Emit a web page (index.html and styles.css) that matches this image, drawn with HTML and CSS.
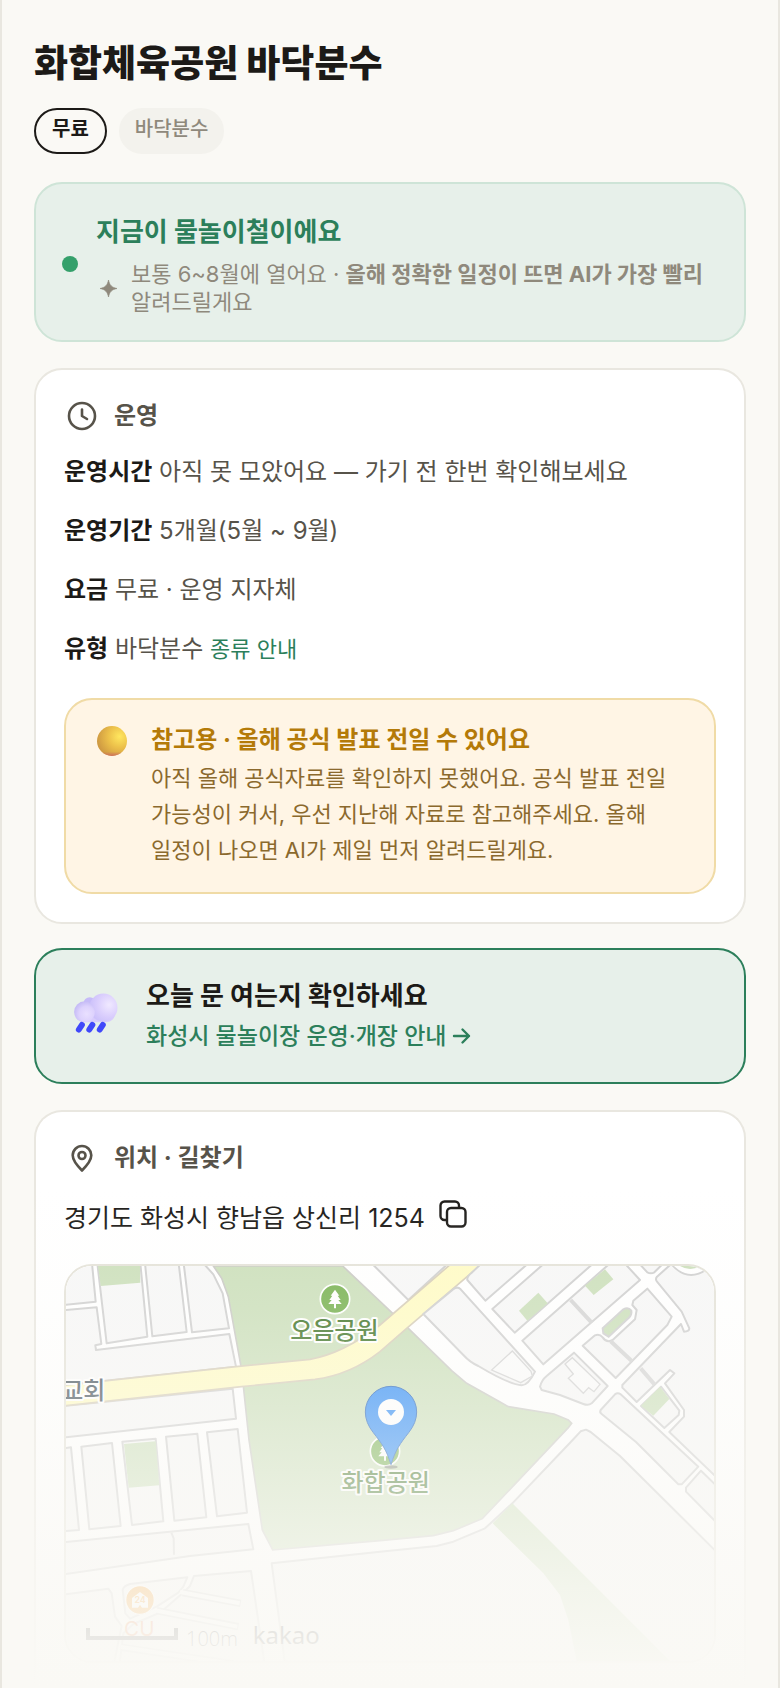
FILE: index.html
```html
<!DOCTYPE html>
<html lang="ko">
<head>
<meta charset="utf-8">
<meta name="viewport" content="width=device-width, initial-scale=1">
<title>화합체육공원 바닥분수</title>
<link rel="stylesheet" href="styles.css">
</head>
<body>
<main class="page">
  <header class="header">
    <h1 class="title">화합체육공원 바닥분수</h1>
    <div class="tags">
      <span class="tag tag-free">무료</span>
      <span class="tag">바닥분수</span>
    </div>
  </header>

  <section class="card status">
    <span class="status-dot"></span>
    <div class="status-body">
      <h2 class="status-title">지금이 물놀이철이에요</h2>
      <div class="status-note">
        <svg class="spark" viewBox="0 0 16 16" aria-hidden="true"><path d="M8 0C9 4.800 11 7 16 8C11 9 9 11.200 8 16C7 11.200 5 9 0 8C5 7 7 4.800 8 0Z" fill="currentColor" stroke="currentColor" stroke-width=".6"/></svg>
        <p>보통 6~8월에 열어요 · <strong>올해 정확한 일정이 뜨면 AI가 가장 빨리</strong> 알려드릴게요</p>
      </div>
    </div>
  </section>

  <section class="card info">
    <h2 class="card-head">
      <svg class="head-icon" viewBox="0 0 36 36" fill="none" stroke="currentColor" stroke-width="2.600" stroke-linecap="round" stroke-linejoin="round" aria-hidden="true"><circle cx="18" cy="18" r="13"/><path d="M18 11.500V18L23 21"/></svg>
      운영
    </h2>
    <div class="rows">
      <p><strong>운영시간</strong> 아직 못 모았어요 — 가기 전 한번 확인해보세요</p>
      <p><strong>운영기간</strong> 5개월(5월 ~ 9월)</p>
      <p><strong>요금</strong> 무료 · 운영 지자체</p>
      <p><strong>유형</strong> 바닥분수 <a class="kind-link" href="#kinds">종류 안내</a></p>
    </div>
    <aside class="notice">
      <svg class="orb" viewBox="0 0 30 30" aria-hidden="true">
        <defs>
          <radialGradient id="orb" cx=".75" cy=".35" r=".75"><stop offset="0" stop-color="#ffe75f"/><stop offset=".5" stop-color="#ecc04a"/><stop offset="1" stop-color="#cf9a42"/></radialGradient>
          <linearGradient id="orbBase" x1="0" y1="0" x2="0" y2="1"><stop offset=".86" stop-color="#d0705e" stop-opacity="0"/><stop offset="1" stop-color="#d0705e"/></linearGradient>
        </defs>
        <circle cx="15" cy="15" r="15" fill="url(#orb)"/><circle cx="15" cy="15" r="15" fill="url(#orbBase)"/>
      </svg>
      <div class="notice-body">
        <h3 class="notice-title">참고용 · 올해 공식 발표 전일 수 있어요</h3>
        <p class="notice-text">아직 올해 공식자료를 확인하지 못했어요. 공식 발표 전일 가능성이 커서, 우선 지난해 자료로 참고해주세요. 올해 일정이 나오면 AI가 제일 먼저 알려드릴게요.</p>
      </div>
    </aside>
  </section>

  <a class="card check" href="#notice">
    <svg class="cloud" viewBox="0 3 44 44" aria-hidden="true">
      <defs>
        <radialGradient id="puffL" cx=".6" cy=".6" r=".6"><stop offset="0" stop-color="#e9e0ff"/><stop offset=".6" stop-color="#ddd2fd"/><stop offset="1" stop-color="#c6bcf6"/></radialGradient>
        <radialGradient id="puffR" cx=".7" cy=".4" r=".7"><stop offset="0" stop-color="#f0e9ff"/><stop offset=".6" stop-color="#dacefd"/><stop offset="1" stop-color="#cbc0fa"/></radialGradient>
      </defs>
      <circle cx="17" cy="13" r="6" fill="#c6bbf8"/>
      <rect x="3" y="14" width="38" height="17" rx="8" fill="#d8ccfc"/>
      <circle cx="30" cy="17" r="13.500" fill="url(#puffR)"/>
      <circle cx="12" cy="21" r="10" fill="url(#puffL)"/>
      <path d="M9.500 33.500L6.500 38M19.500 33.500L16.500 38M29.500 33.500L26.500 38" stroke="#4048fa" stroke-width="5.600" stroke-linecap="round"/>
    </svg>
    <span class="check-body">
      <strong class="check-title">오늘 문 여는지 확인하세요</strong>
      <span class="check-link">화성시 물놀이장 운영·개장 안내
        <svg class="arrow" viewBox="0 0 20 20" fill="none" stroke="currentColor" stroke-width="2.400" stroke-linecap="round" stroke-linejoin="round" aria-hidden="true"><path d="M2 10H17M10.500 3.500L17 10L10.500 16.500"/></svg>
      </span>
    </span>
  </a>

  <section class="card place">
    <h2 class="card-head">
      <svg class="head-icon" viewBox="0 0 36 36" fill="none" stroke="currentColor" stroke-width="2.600" stroke-linejoin="round" aria-hidden="true"><path d="M18 30.500C12 24.500 8.700 20 8.700 15.300A9.300 9.300 0 0 1 27.300 15.300C27.300 20 24 24.500 18 30.500Z"/><circle cx="18" cy="15.500" r="3.500"/></svg>
      위치 · 길찾기
    </h2>
    <div class="address">
      <span>경기도 화성시 향남읍 상신리 1254</span>
      <button class="copy" type="button" aria-label="주소 복사">
        <svg viewBox="0 0 28 28" fill="none" stroke="currentColor" stroke-width="2.400" stroke-linejoin="round" aria-hidden="true"><rect x="8" y="8" width="18.500" height="18.500" rx="4"/><path d="M8 20H5.500A4 4 0 0 1 1.500 16V5.500A4 4 0 0 1 5.500 1.500H16A4 4 0 0 1 20 5.500V8"/></svg>
      </button>
    </div>
    <div class="map">
      <svg class="map-art" viewBox="198 78 1944 1184" preserveAspectRatio="xMidYMid slice" role="img" aria-label="화합공원 지도">
        <rect x="198" y="78" width="1944" height="1184" fill="#fff"/>
        <g class="park">
          <path d="M640 78H1028L1178 220L1225 265L1355 392L1400 430L1495 483L1525 500L1662 522L1705 540L1715 550L1705 563L1447 836L1360 872L1300 887L1140 902L818 930L787 870L747 600L725 390L685 170L665 115Z"/>
        </g>
        <g class="block">
          <path d="M190 70H276L287 185L190 195Z"/>
          <path d="M292 70H421L442 290L320 310Z"/>
          <path d="M435 70H536L560 276L457 289Z"/>
          <path d="M551 70H610L640 103L668 160L687 265L576 277Z"/>
          <path d="M190 211L290 202L304 312L286 316L288 330L688 282L708 380L190 436Z"/>
          <path d="M190 498L698 446L708 536L190 593Z"/>
          <path d="M190 625L213 622L237 870L190 874Z"/>
          <path d="M244 620L336 609L362 858L268 868Z"/>
          <path d="M367 605L467 596L490 844L396 855Z"/>
          <path d="M498 590L592 581L619 832L523 842Z"/>
          <path d="M621 577L713 567L741 818L651 829Z"/>
          <path d="M190 907L745 852L760 928L570 948L190 1003Z"/>
          <path d="M514 878L521 895L522 944"/>
          <path d="M190 1064L325 1046L335 1060L345 1130L365 1158L340 1280H190Z"/>
          <path d="M368 1050Q370 1038 390 1032L562 1012L550 1040L535 1058L470 1100L390 1136L376 1120Z"/>
          <path d="M582 1008L753 993L795 1280H358L370 1180L400 1152L480 1118L552 1056L570 1038Z"/>
          <path d="M815 970L1140 935L1310 918L1360 905L1455 865L1537 790L1718 600L1742 574L1758 569L1772 576L1860 648L2150 936V1280H856Z"/>
          <path d="M1115 70H1345L1225 180Z"/>
        </g>
        <g class="lane">
          <path d="M548 1058L722 1090M470 1112L715 1160M365 1222L700 1272"/>
        </g>
        <g class="lane-fill">
          <path d="M540 1056L719 1090M464 1111L712 1160M362 1221L700 1272"/>
        </g>
        <g class="green">
          <path d="M294 78H420L421 128L302 138Z"/>
          <path d="M372 612L467 604L478 736L386 743Z"/>
          <path d="M1478 850L1537 790L2010 1263H1730L1705 1140L1680 1065L1630 1000Z"/>
        </g>
        <path class="avenue" d="M190 436L708 380L930 358Q1030 340 1140 255L1355 70H1448L1220 265L1140 335Q1050 405 945 418L725 440L190 498Z"/>
        <g transform="translate(1140 0)">
          <g class="block">
            <path d="M130 222L220 148Q232 138 242 148L465 395Q445 436 425 436Q385 432 295 378Q270 367 250 345Z"/>
            <path d="M262 120Q260 110 275 98L305 70H445L316 182Z"/>
            <path d="M337 207L493 70H640L404 278Z"/>
            <path d="M427 302L690 70H734L780 120L490 373Z"/>
            <path d="M777 70L802 97Q813 103 823 97L850 70Z"/>
            <path d="M608 317L645 286Q658 280 668 292Q680 310 698 300L765 238L770 210L757 195L760 182L802 146L875 230L862 255L707 414Z"/>
            <path d="M876 70L831 110Q825 118 831 125L905 215L928 265Q928 275 912 275L903 252L727 435V443L770 486L870 390L883 400L855 430L912 510V530L868 576L1010 712V70Z"/>
            <path d="M783 498L843 440L898 512L896 525L853 564Z"/>
            <path d="M480 440Q485 420 500 408L582 338L683 438L635 490Q625 498 610 492L540 465L485 450Z"/>
            <path d="M662 510L705 463Q713 456 722 463L955 680L905 733H895L768 606L665 522Q658 517 662 510Z"/>
            <path d="M963 692L1010 738V848L918 755V743Z"/>
          </g>
          <g class="green">
            <path d="M417 212L475 158L503 190L442 242Z"/>
            <path d="M615 137L675 88L700 118L641 165Z"/>
            <path d="M783 497L840 440L868 477L820 527Z"/>
          </g>
          <path class="plot" d="M668 265L730 208Q745 200 754 212Q756 222 748 232L686 290L670 280Z"/>
          <path class="bend" d="M880 70Q925 120 978 82"/>
          <path class="bend-fill" d="M880 66Q925 116 978 78"/>
          <path class="green" d="M900 78H962Q930 96 900 78Z"/>
          <path class="alley" d="M572 180L635 248M692 304L756 364M782 385L824 434"/>
          <path class="building" d="M397 333L335 390L422 428L457 408L453 394Z"/>
          <path class="building" d="M555 372L577 353L660 433L642 455L626 443L610 460L565 415L580 402Z"/>
        </g>
        <g transform="translate(1005 177)">
          <circle class="tree-bg" r="44"/>
          <path fill="#fff" d="M0 -28L13 -10H8L17 3H10L20 15H3V28H-3V15H-20L-10 3H-17L-8 -10H-13Z"/>
        </g>
        <g transform="translate(1155 634)">
          <circle class="tree-bg" r="44"/>
          <path fill="#fff" d="M0 -28L13 -10H8L17 3H10L20 15H3V28H-3V15H-20L-10 3H-17L-8 -10H-13Z"/>
        </g>
        <ellipse cx="1173" cy="681" rx="20" ry="5" fill="#555" opacity=".6"/>
        <path d="M1173 674C1160 630 1145 610 1120 578Q1096 548 1096 516A77 77 0 0 1 1250 516Q1250 548 1226 578C1201 610 1186 630 1173 674Z" fill="#2f8cf6" stroke="#2464bc" stroke-width="3"/>
        <circle cx="1173" cy="516" r="39" fill="#fff"/>
        <path d="M1158 510H1188L1173 528Z" fill="#2f8cf6"/>
        <g class="map-label">
          <text x="1003" y="296" text-anchor="middle">오음공원</text>
          <text x="1157" y="754" text-anchor="middle">화합공원</text>
          <text class="label-church" x="316" y="478" text-anchor="end">교회</text>
        </g>
        <circle cx="420" cy="1080" r="43" fill="#f58a00" stroke="#fff" stroke-width="4"/>
        <path d="M396 1103V1074L420 1056L444 1074V1103H426L420 1094L414 1103Z" fill="#fff"/>
        <text class="label-hours" x="420" y="1090" text-anchor="middle">24</text>
        <text class="label-store" x="418" y="1188" text-anchor="middle">CU</text>
        <path d="M264 1164V1194H528V1164" fill="none" stroke="#111" stroke-width="12"/>
        <text class="label-scale" x="558" y="1217">100m</text>
        <text class="label-brand" x="758" y="1211">kakao</text>
      </svg>
    </div>
  </section>
  <div class="fade"></div>
</main>
</body>
</html>
```
FILE: styles.css
```css
* { box-sizing: border-box; }

body {
  margin: 0;
  background: #faf9f5;
  color: #1c1a17;
  font-family: Inter, "Noto Sans CJK KR", sans-serif;
  font-size: 24px;
  line-height: 36px;
  word-break: keep-all;
}

h1, h2, h3, p { margin: 0; }
a { color: inherit; text-decoration: none; }

.page {
  position: relative;
  display: flex;
  flex-direction: column;
  gap: 26px;
  min-height: 100vh;
  padding: 36px 32px 0;
  border: solid #e9e7e0;
  border-width: 0 2px;
  overflow: hidden;
}

.header { padding-bottom: 2px; }
.title { font-size: 37px; line-height: 56px; font-weight: 800; }
.tags { display: flex; gap: 12px; margin-top: 16px; }
.tag {
  padding: 5px 14px 9px;
  border: 2px solid #f3f2ed;
  border-radius: 23px;
  background: #f3f2ed;
  color: #8f897c;
  font-size: 20px;
  line-height: 28px;
  font-weight: 500;
}
.tag-free { padding-inline: 16px; border-color: #1c1a17; background: #faf9f5; color: #1c1a17; font-weight: 700; }

.card {
  padding: 28px;
  border: 2px solid #e9e7e0;
  border-radius: 28px;
  background: #fff;
}

.status {
  display: flex;
  align-items: center;
  gap: 18px;
  padding: 28px 26px 24px;
  border-color: #cee4d7;
  background: #e7f0ea;
}
.status-dot { flex: none; width: 16px; height: 16px; border-radius: 50%; background: #35a06b; }
.status-title { color: #2c7f5b; font-size: 26px; line-height: 40px; font-weight: 700; }
.status-note {
  display: flex;
  align-items: center;
  gap: 14px;
  padding: 8px 0 0 4px;
  color: #8f897c;
  font-size: 22px;
  line-height: 28px;
}
.spark { flex: none; width: 17px; height: 17px; }

.card-head {
  display: flex;
  align-items: center;
  gap: 14px;
  color: #57534a;
  font-size: 24px;
  line-height: 36px;
  font-weight: 700;
}
.head-icon { flex: none; width: 36px; height: 36px; }

.rows { display: flex; flex-direction: column; gap: 23px; margin-top: 20px; color: #57534a; }
.rows strong { color: #1c1a17; }
.kind-link { color: #2c7f5b; font-size: 22px; }

.notice {
  display: flex;
  gap: 24px;
  margin-top: 31px;
  padding: 22px 30px 24px 31px;
  border: 2px solid #f0dba6;
  border-radius: 28px;
  background: #fff5e5;
}
.orb { flex: none; width: 30px; height: 30px; margin-top: 4px; }
.notice-title { color: #b47a08; font-size: 24px; line-height: 36px; font-weight: 700; }
.notice-text { margin-top: 2px; color: #8b692d; font-size: 22px; line-height: 36px; }

.check {
  display: flex;
  align-items: center;
  gap: 28px;
  margin-top: -2px;
  padding: 26px 36px;
  border-color: #2c7f5b;
  background: #e7f0ea;
}
.cloud { flex: none; width: 46px; height: 46px; }
.check-body { display: flex; flex-direction: column; }
.check-title { font-size: 26px; line-height: 40px; }
.check-link { display: flex; align-items: center; gap: 6px; color: #2c7f5b; font-size: 23px; line-height: 40px; font-weight: 500; }
.arrow { width: 20px; height: 20px; }

.place { flex: 1; padding-bottom: 24px; border-bottom: 0; border-radius: 28px 28px 0 0; }
.address { display: flex; align-items: center; gap: 14px; margin-top: 24px; font-size: 25px; }
.copy { padding: 0 0 8px; border: 0; background: none; color: #1c1a17; line-height: 0; }
.copy svg { width: 28px; height: 28px; }

.map {
  margin-top: 28px;
  border: 2px solid #e4e2d8;
  border-radius: 28px;
  overflow: hidden;
}
.map-art { display: block; width: 100%; }

.park { fill: #cbdfba; stroke: #c9c9c4; stroke-width: 5; }
.block { fill: #f7f7f7; stroke: #cfcfcf; stroke-width: 6; stroke-linejoin: round; }
.green { fill: #cbdfba; }
.plot { fill: #cbdfba; stroke: #cfcfcf; stroke-width: 6; }
.avenue { fill: #fffbc4; stroke: #d6cdb8; stroke-width: 5; }
.lane { fill: none; stroke: #cfcfcf; stroke-width: 22; }
.lane-fill { fill: none; stroke: #fff; stroke-width: 12; }
.bend { fill: none; stroke: #cfcfcf; stroke-width: 18; }
.bend-fill { fill: none; stroke: #fff; stroke-width: 14; }
.alley { fill: none; stroke: #d4d4d4; stroke-width: 12; }
.building { fill: #fbfbfb; stroke: #d2d2d2; stroke-width: 4; }
.tree-bg { fill: #77b150; stroke: #fff; stroke-width: 5; }
.map-label {
  fill: #3f7427;
  stroke: #fff;
  stroke-width: 12;
  stroke-linejoin: round;
  paint-order: stroke;
  font-size: 72px;
  font-weight: 500;
}
.label-church { fill: #45525b; }
.label-hours { fill: #f58a00; font-size: 26px; font-weight: 700; }
.label-store { fill: #e8661a; font-size: 62px; }
.label-scale { fill: #111; font-family: "Open Sans", sans-serif; font-size: 60px; font-weight: 300; }
.label-brand { fill: #111; font-family: "Noto Sans", sans-serif; font-size: 72px; }

.fade {
  position: absolute;
  inset: auto 0 0;
  height: 500px;
  background: linear-gradient(to bottom, rgba(250, 249, 245, 0), rgba(250, 249, 245, .2) 25%, rgba(250, 249, 245, .85) 80%, rgba(250, 249, 245, .97) 95%, #faf9f5);
  pointer-events: none;
}
```
